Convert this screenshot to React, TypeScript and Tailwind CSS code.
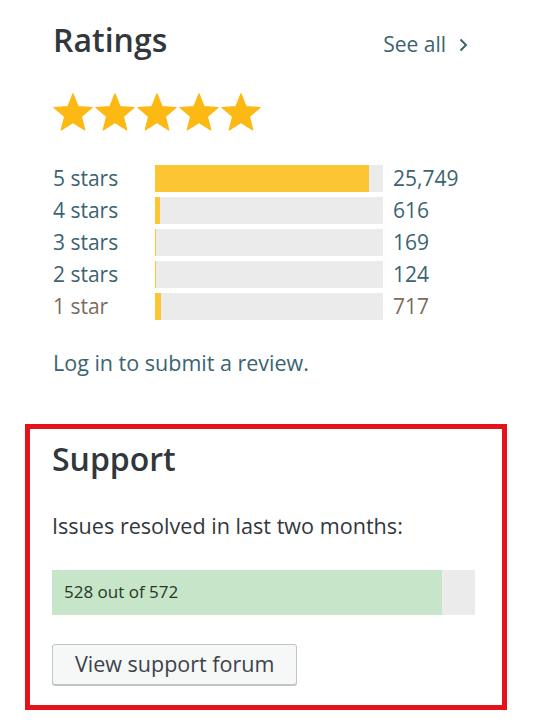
import React from "react";

interface RatingRow {
  label: string;
  count: string;
  fill: string;
  tone: "link" | "muted";
}

const ROWS: RatingRow[] = [
  { label: "5 stars", count: "25,749", fill: "w-[94%]", tone: "link" },
  { label: "4 stars", count: "616", fill: "w-[5px]", tone: "link" },
  { label: "3 stars", count: "169", fill: "w-[1px]", tone: "link" },
  { label: "2 stars", count: "124", fill: "w-[1px]", tone: "link" },
  { label: "1 star", count: "717", fill: "w-[6px]", tone: "muted" },
];

const Star = () => (
  <svg width="40" height="40" viewBox="0 0 100 100" aria-hidden="true">
    <polygon
      points="50,2 62.9,34.2 97.6,36.5 70.9,58.8 79.4,92.5 50,74 20.6,92.5 29.1,58.8 2.4,36.5 37.1,34.2"
      fill="#fdb913"
      stroke="#fdb913"
      strokeWidth="3"
      strokeLinejoin="round"
    />
  </svg>
);

const App: React.FC = () => {
  return (
    <div className="w-[546px] h-[720px] bg-white font-['Open_Sans',sans-serif]">
      {/* ratings */}
      <section className="pl-[53px] pr-[78px] pt-[20px]">
        <div className="flex items-baseline justify-between">
          <h2 className="text-[32px] leading-[40px] font-semibold text-[#32373c]">Ratings</h2>
          <a href="#" className="flex items-baseline gap-[12px] text-[21px] text-[#3b6470]">
            See all
            <svg width="10" height="14" viewBox="0 0 10 14" className="self-center" aria-hidden="true">
              <path d="M2.5 1.5 L8 7 L2.5 12.5" fill="none" stroke="#3b6470" strokeWidth="2" />
            </svg>
          </a>
        </div>

        <div className="mt-[32px] flex gap-[2px]">
          <Star />
          <Star />
          <Star />
          <Star />
          <Star />
        </div>

        <ul className="mt-[32px] flex flex-col gap-[5px]">
          {ROWS.map(row => (
            <li
              key={row.label}
              className={`flex items-center text-[21px] leading-[25px] ${
                row.tone === "muted" ? "text-[#7d6b5e]" : "text-[#3b6470]"
              }`}
            >
              <span className="w-[102px]">{row.label}</span>
              <div className="w-[228px] h-[27px] bg-[#ebebeb]">
                <div className={`h-full bg-[#fcc534] ${row.fill}`} />
              </div>
              <span className="ml-[10px]">{row.count}</span>
            </li>
          ))}
        </ul>

        <p className="mt-[29px] text-[21.5px] leading-[28px] text-[#3b6470]">Log in to submit a review.</p>
      </section>

      {/* support */}
      <section className="mt-[47px] ml-[25px] w-[482px] border-[5px] border-[#e3121b] pl-[22px] pr-[27px] pt-[10px] pb-[20px]">
        <h2 className="text-[32px] leading-[40px] font-semibold text-[#32373c]">Support</h2>
        <p className="mt-[33px] text-[21.6px] leading-[28px] text-[#32373c]">Issues resolved in last two months:</p>

        <div className="relative mt-[30px] h-[45px] bg-[#ebebeb]">
          <div className="h-full w-[92.3%] bg-[#c7e5c9]" />
          <span className="absolute left-[12px] top-0 flex h-full items-center text-[17px] text-[#253826]">
            528 out of 572
          </span>
        </div>

        <button className="mt-[29px] h-[41px] rounded-[3px] border border-[#c3c4c7] bg-[#f6f7f7] px-[22px] text-[21.5px] text-[#3c434a] shadow-[0_1px_0_#c3c4c7]">
          View support forum
        </button>
      </section>
    </div>
  );
};

export default App;
